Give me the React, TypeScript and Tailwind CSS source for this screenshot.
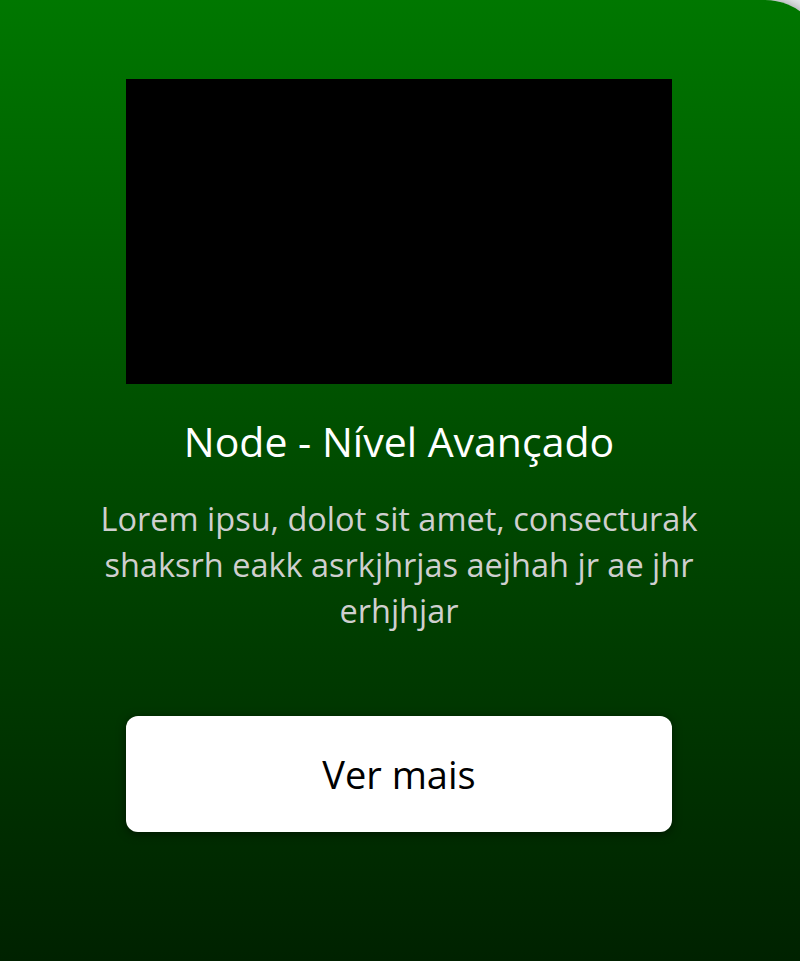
export default function App() {
  return (
    <div className="w-[800px] h-[961px] overflow-hidden bg-gradient-to-br from-white via-gray-200 to-gray-300 font-['Open_Sans',sans-serif]">
      <div className="mr-[-25px] pr-[27px] h-[961px] rounded-tr-[60px] bg-gradient-to-b from-[#007700] to-[#002200] shadow-[0_0_12px_rgba(0,0,0,0.35)] flex flex-col items-center pt-[79px]">
        <div className="w-[546px] h-[305px] bg-black" />

        <h2 className="mt-[33px] text-[41px] leading-[49px] text-white font-normal text-center">
          Node - Nível Avançado
        </h2>

        <p className="mt-[30px] w-[620px] text-[32.5px] leading-[46px] text-[#cfcfcf] text-center">
          Lorem ipsu, dolot sit amet, consecturak shaksrh eakk asrkjhrjas aejhah jr ae jhr erhjhjar
        </p>

        <button className="mt-[82px] w-[546px] h-[116px] rounded-[12px] bg-white text-black text-[38px] shadow-[0_2px_10px_rgba(0,0,0,0.5)]">
          Ver mais
        </button>
      </div>
    </div>
  )
}
